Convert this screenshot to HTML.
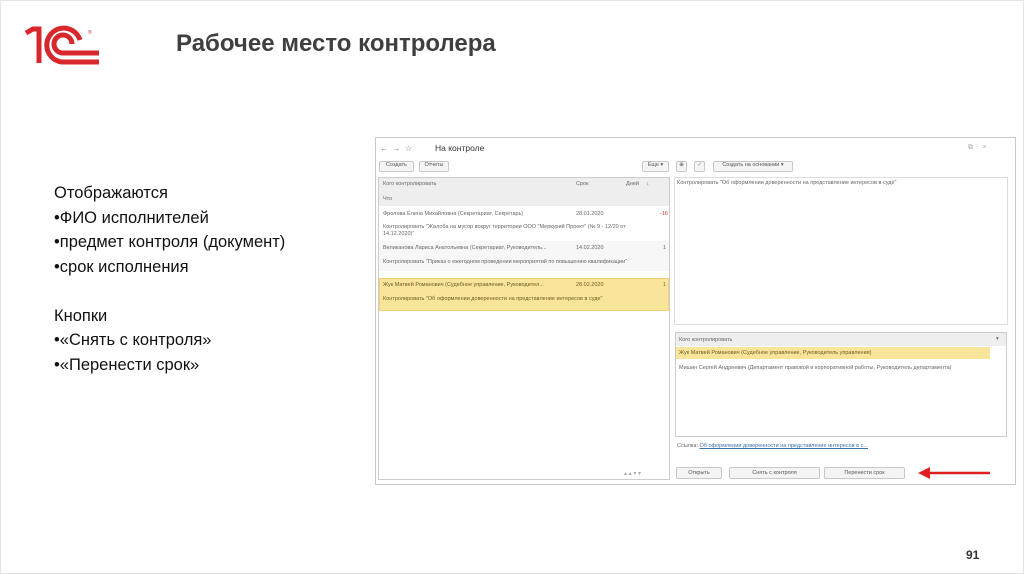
<!DOCTYPE html>
<html><head><meta charset="utf-8"><style>
*{margin:0;padding:0;box-sizing:border-box}
body{width:1024px;height:574px;background:#fff;position:relative;overflow:hidden;font-family:"Liberation Sans",sans-serif}
.a{position:absolute}
.t{font-size:5.5px;color:#666;white-space:nowrap}
.btn{position:absolute;border:1px solid #c8c8c8;background:#f4f4f4;border-radius:2px;font-size:5.5px;color:#555;text-align:center}
</style></head><body>
<div class="a" style="left:0;top:0;width:1024px;height:574px;border:1px solid #e4e4e4"></div>
<svg class="a" style="left:0;top:0" width="110" height="70" viewBox="0 0 110 70">
<g fill="none" stroke="#d8272d" stroke-width="5">
<path d="M26 33 L33 29 H39 V63"/>
<path d="M80 40 A17 17 0 1 0 62 62 H99"/>
<path d="M72 44 A9 9 0 1 0 62 53 H99"/>
</g>
<text x="88" y="34" font-size="5" fill="#d8272d">®</text>
</svg>
<div class="a" style="left:176px;top:30px;font-size:24px;font-weight:bold;color:#3f3f3f">Рабочее место контролера</div>
<div class="a" style="left:54px;top:181px;font-size:16.5px;line-height:24.5px;color:#111">Отображаются<br>•ФИО исполнителей<br>•предмет контроля (документ)<br>•срок исполнения<br><br>Кнопки<br>•«Снять с контроля»<br>•«Перенести срок»</div>
<div class="a" style="left:966px;top:548px;font-size:12px;font-weight:bold;color:#333">91</div>

<div class="a" style="left:375px;top:137px;width:641px;height:348px;border:1px solid #c8c8c8;background:#fff"></div>
<div class="a t" style="left:380px;top:144px;font-size:8px;color:#777">←&nbsp; →&nbsp; ☆</div>
<div class="a" style="left:435px;top:143px;font-size:8.5px;color:#333">На контроле</div>
<div class="a t" style="left:968px;top:144px;font-size:7px;color:#aaa">⧉ &nbsp;⋮ &nbsp;×</div>
<div class="btn" style="left:379px;top:161px;width:35px;height:11px">Создать</div>
<div class="btn" style="left:419px;top:161px;width:30px;height:11px">Отчеты</div>
<div class="btn" style="left:642px;top:161px;width:27px;height:11px">Еще ▾</div>
<div class="btn" style="left:676px;top:161px;width:11px;height:11px">⊕</div>
<div class="btn" style="left:694px;top:161px;width:11px;height:11px;color:#4a4">✓</div>
<div class="btn" style="left:713px;top:161px;width:80px;height:11px">Создать на основании ▾</div>

<div class="a" style="left:378px;top:177px;width:292px;height:303px;border:1px solid #ccc"></div>
<div class="a" style="left:379px;top:178px;width:290px;height:28px;background:#eeeeee"></div>
<div class="a t" style="left:383px;top:181px">Кого контролировать</div>
<div class="a t" style="left:576px;top:181px">Срок</div>
<div class="a t" style="left:626px;top:181px">Дней &nbsp;&nbsp;&nbsp;&nbsp;↓</div>
<div class="a t" style="left:383px;top:196px">Что</div>
<div class="a t" style="left:383px;top:211px">Фролова Елена Михайловна (Секретариат, Секретарь)</div>
<div class="a t" style="left:576px;top:211px">28.01.2020</div>
<div class="a t" style="left:660px;top:211px;color:#c33">-16</div>
<div class="a t" style="left:383px;top:224px;line-height:7px">Контролировать "Жалоба на мусор вокруг территории ООО "Меркурий Проект" (№ 9 - 12/20 от<br>14.12.2020)"</div>
<div class="a" style="left:379px;top:241px;width:290px;height:30px;background:#f7f7f7"></div>
<div class="a t" style="left:383px;top:245px">Великанова Лариса Анатольевна (Секретариат, Руководитель...</div>
<div class="a t" style="left:576px;top:245px">14.02.2020</div>
<div class="a t" style="left:663px;top:245px">1</div>
<div class="a t" style="left:383px;top:259px">Контролировать "Приказ о ежегодном проведении мероприятий по повышению квалификации"</div>
<div class="a" style="left:379px;top:278px;width:290px;height:33px;background:#f9e59a;border:1px solid #f0d070"></div>
<div class="a t" style="left:383px;top:282px;color:#6a5a20">Жук Матвей Романович (Судебное управление, Руководител...</div>
<div class="a t" style="left:576px;top:282px;color:#6a5a20">28.02.2020</div>
<div class="a t" style="left:663px;top:282px">1</div>
<div class="a t" style="left:383px;top:296px;color:#6a5a20">Контролировать "Об оформлении доверенности на представление интересов в суде"</div>
<div class="a t" style="left:624px;top:470px;color:#aaa;font-size:6px">▴ ▴ ▾ ▾</div>

<div class="a" style="left:674px;top:177px;width:334px;height:148px;border:1px solid #ddd"></div>
<div class="a t" style="left:677px;top:180px">Контролировать "Об оформлении доверенности на представление интересов в суде"</div>
<div class="a" style="left:675px;top:332px;width:332px;height:105px;border:1px solid #ccc"></div>
<div class="a" style="left:676px;top:333px;width:330px;height:13px;background:#eee"></div>
<div class="a t" style="left:679px;top:337px">Кого контролировать</div>
<div class="a t" style="left:996px;top:336px">▾</div>
<div class="a" style="left:676px;top:347px;width:314px;height:12px;background:#f9e59a"></div>
<div class="a t" style="left:679px;top:350px;color:#6a5a20">Жук Матвей Романович (Судебное управление, Руководитель управления)</div>
<div class="a t" style="left:679px;top:365px">Мишин Сергей Андреевич (Департамент правовой и корпоративной работы, Руководитель департамента)</div>
<div class="a t" style="left:677px;top:443px">Ссылка: <span style="color:#3a6fb0;text-decoration:underline">Об оформлении доверенности на представление интересов в с...</span></div>
<div class="btn" style="left:676px;top:467px;width:46px;height:12px;line-height:10px">Открыть</div>
<div class="btn" style="left:729px;top:467px;width:91px;height:12px;line-height:10px">Снять с контроля</div>
<div class="btn" style="left:824px;top:467px;width:81px;height:12px;line-height:10px">Перенести срок</div>
<svg class="a" style="left:916px;top:466px" width="74" height="14"><path d="M74 7 H12" stroke="#e02020" stroke-width="2.5"/><path d="M2 7 L14 1 V13 Z" fill="#e02020"/></svg>
</body></html>
